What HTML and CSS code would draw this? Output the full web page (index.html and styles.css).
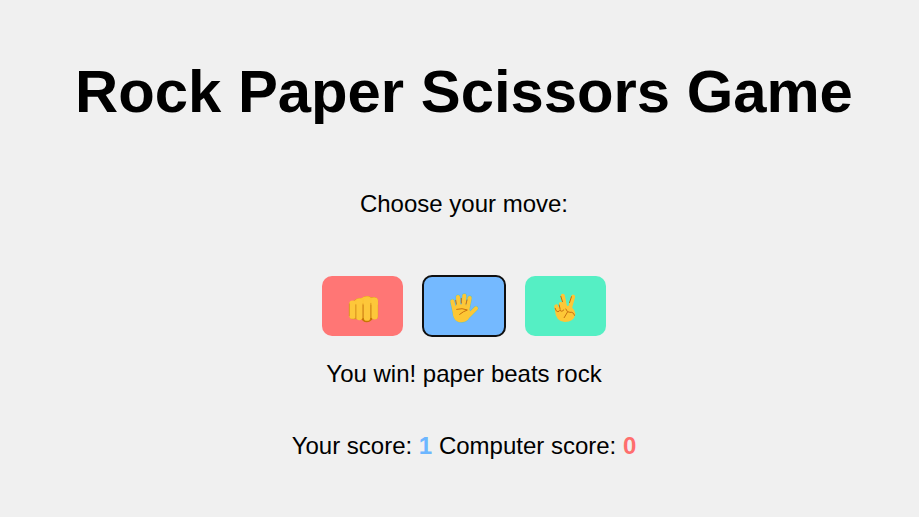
FILE: index.html
```html
<!DOCTYPE html>
<html lang="en">
<head>
<meta charset="utf-8">
<title>Rock Paper Scissors Game</title>
<link rel="stylesheet" href="styles.css">
</head>
<body>
<main class="game">
  <h1 class="title">Rock Paper Scissors Game</h1>
  <p class="prompt">Choose your move:</p>
  <div class="moves">
    <button class="move rock" aria-label="rock">
      <svg class="icon" viewBox="88.5 60 108 108">
        <path d="M101 107Q103 98 115 98Q123 88 139 90Q145 84 155 84Q162 84 166 88Q185 84 188 98V144Q188 154 178 154H108Q101 150 101 142Z" fill="#dc931f"/>
        <path d="M136 150H172Q168 162 153 163Q141 162 136 150Z" fill="#c87505"/>
        <path d="M103 107Q106 99 117 98Q124 90 137 91Q145 85 155 85Q162 85 166 89Q184 86 187 98V110H103Z" fill="#fdc535"/>
        <path d="M111 107V143M131.500 102V147M154.500 98V149M177.500 98V145" fill="none" stroke="#fdc73a" stroke-width="19" stroke-linecap="round"/>
        <path d="M101.500 108V143M121 110V148M142.500 108V150M166 106V149" fill="none" stroke="#d9921f" stroke-width="2.500" stroke-linecap="round"/>
      </svg>
    </button>
    <button class="move paper selected" aria-label="paper">
      <svg class="icon" viewBox="93 60 108 108">
        <g class="halo">
          <path d="M112 100L119 130M129 87L131 125M148 83L146 122M164 90L157 125M183 121L162 142"/>
          <path d="M113 123Q142 105 164 127L168 135Q163 162 141 163Q111 164 113 123Z"/>
        </g>
        <path class="fingers" d="M112 100L119 130M129 87L131 125M148 83L146 122M164 90L157 125M183 121L162 142"/>
        <path d="M113 123Q118 109 140 109Q156 110 164 127L168 135Q163 162 141 163Q111 164 113 123Z" fill="#fdc735"/>
        <path class="creases" d="M124 108L122 97M139 105L139 91M153 108L156 96"/>
        <path class="creases" d="M125 124Q142 119 157 126Q145 130 134 139"/>
      </svg>
    </button>
    <button class="move scissors" aria-label="scissors">
      <svg class="icon" viewBox="97.5 60 108 108">
        <path d="M118 125Q140 105 168 117Q178 125 180 138Q175 162 148 162Q120 160 118 125Z" fill="#fdc737"/>
        <path class="fingers" d="M142 83L150 122M173 86L162 125M122 115L126 129M136 108L141 128"/>
        <path class="creases" d="M119 121Q121 131 127 131Q132 130 133 127Q139 134 145 126M131 111L134 124M136 85L141 101M168 86L162 104"/>
        <path class="creases" d="M151 123L156 131Q164 134 169 133Q176 135 177 142M156 132L146 149"/>
      </svg>
    </button>
  </div>
  <p class="result">You win! paper beats rock</p>
  <p class="scores">Your score: <span class="player">1</span> Computer score: <span class="computer">0</span></p>
</main>
</body>
</html>
```

FILE: styles.css
```css
* { box-sizing: border-box; }
body {
  margin: 0;
  background: #f0f0f0;
  color: #000;
  font-family: "Liberation Sans", Arial, sans-serif;
  font-size: 24px;
  line-height: 28px;
}
.game {
  padding: 57px 0 0 9px;
  text-align: center;
}
.title {
  margin: 0;
  font-size: 59.8px;
  line-height: 70px;
  white-space: nowrap;
}
.prompt { margin: 63px 0 0; }
.moves {
  display: flex;
  justify-content: center;
  align-items: center;
  gap: 19px;
  height: 62px;
  margin-top: 57px;
}
.move {
  display: grid;
  place-items: center;
  width: 81px;
  height: 60px;
  padding: 0;
  border: 0;
  border-radius: 10px;
}
.rock { background: #ff7675; }
.paper { background: #74b9ff; }
.scissors { background: #55efc4; }
.selected {
  width: 84px;
  height: 62px;
  border: 2px solid #101010;
}
.icon {
  display: block;
  width: 36px;
  height: 36px;
}
.fingers,
.creases,
.halo {
  fill: none;
  stroke-linecap: round;
  stroke-linejoin: round;
}
.fingers {
  stroke: #fdc737;
  stroke-width: 12;
}
.creases {
  stroke: #c8700f;
  stroke-width: 3;
}
.halo {
  stroke: #5fc0c8;
  stroke-width: 15;
}
.halo path + path { stroke-width: 3; }
.result { margin: 23px 0 0; }
.scores { margin: 44px 0 0; }
.player, .computer { font-weight: bold; }
.player { color: #6cb6ff; }
.computer { color: #ff6e6d; }
```
